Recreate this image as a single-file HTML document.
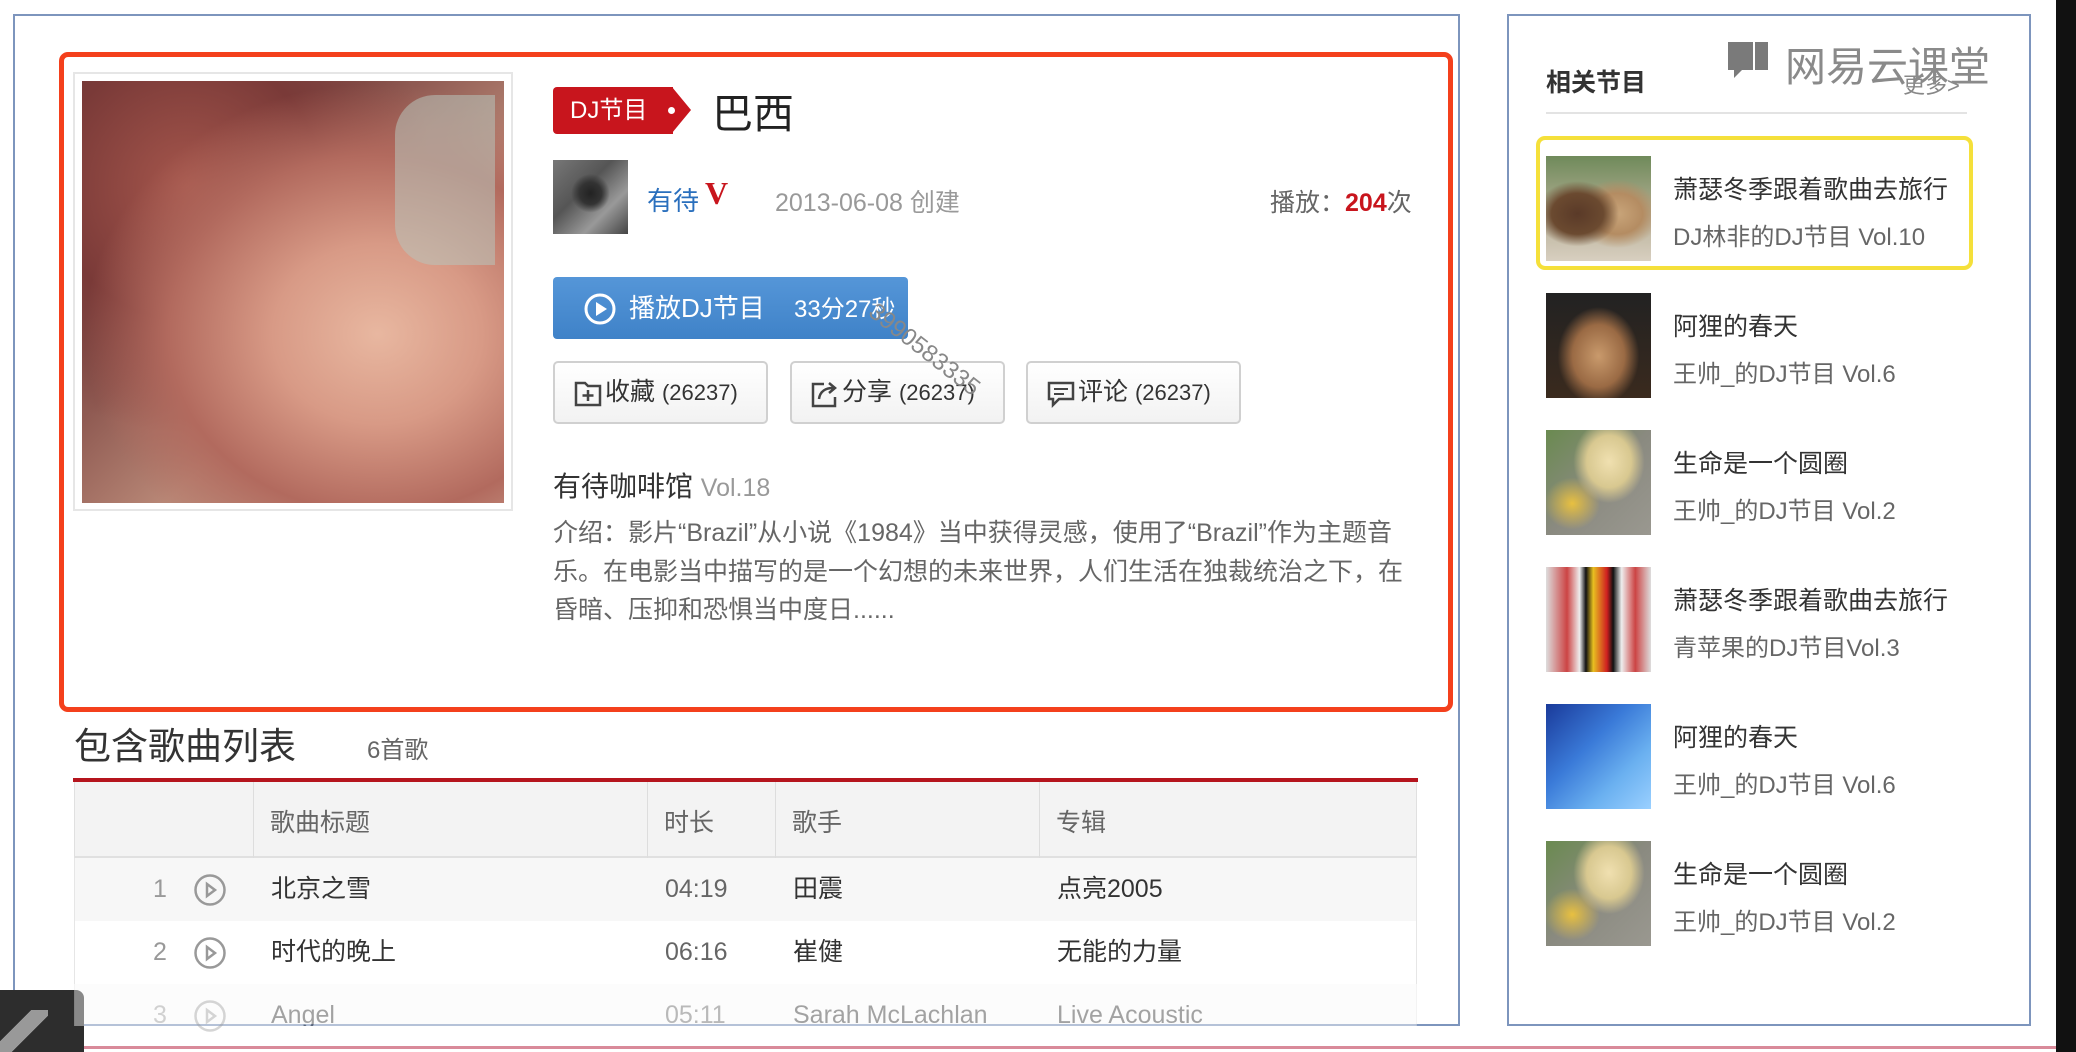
<!DOCTYPE html>
<html><head><meta charset="utf-8"><style>
*{margin:0;padding:0;box-sizing:border-box}
body{width:2076px;height:1052px;background:#fff;position:relative;overflow:hidden;font-family:"Liberation Sans","Noto Sans CJK SC",sans-serif;color:#333}
.a{position:absolute;white-space:nowrap}
.btn{position:absolute;top:361px;height:63px;width:215px;border:2px solid #d0d0d0;border-radius:5px;background:linear-gradient(#fff,#f2f2f2);font-size:25px;line-height:59px;color:#333;padding-left:50px}
.btn svg{position:absolute;left:18px;top:16px}
.thumb{position:absolute;left:1546px;width:105px;height:105px}
.t1{position:absolute;left:1673px;font-size:25px;color:#333}
.t2{position:absolute;left:1673px;font-size:24px;color:#666}
.row{position:absolute;left:74px;width:1343px;height:63px;font-size:25px;line-height:63px}
.row span{position:absolute;top:0}
</style></head><body>
<div class="a" style="left:13px;top:14px;width:1447px;height:1012px;border:2px solid #7d95bd"></div>
<div class="a" style="left:1507px;top:14px;width:524px;height:1012px;border:2px solid #7d95bd"></div>
<div class="a" style="left:2056px;top:0;width:20px;height:1052px;background:#111"></div>
<div class="a" style="left:0;top:1046px;width:2056px;height:3px;background:#d98a9a"></div>
<div class="a" style="left:0;top:990px;width:84px;height:62px;background:#2d2d2d;border-radius:0 8px 0 0"></div>
<div class="a" style="left:0;top:1010px;width:48px;height:42px;background:linear-gradient(135deg,transparent 35%,#999 35%,#999 60%,transparent 60%)"></div>

<div class="a" style="left:59px;top:52px;width:1394px;height:660px;border:5px solid #f4401c;border-radius:9px"></div>

<div class="a" style="left:73px;top:72px;width:440px;height:439px;border:2px solid #e6e6e6;background:#fff"></div>
<div class="a" style="left:82px;top:81px;width:422px;height:422px;background:radial-gradient(ellipse at 70% 60%,#e8b7a0 0,#d89a86 25%,#b26a5e 50%,transparent 70%),radial-gradient(ellipse at 25% 25%,#a5564c 0,#7a3a38 30%,transparent 55%),linear-gradient(135deg,#5e3534 0,#8f5a52 40%,#b98877 60%,#caa18f 100%)"></div>
<div class="a" style="left:395px;top:95px;width:100px;height:170px;background:#b8c4bb;opacity:.55;border-radius:40px 0 0 40px"></div>

<div class="a" style="left:553px;top:87px;width:120px;height:47px;background:#c8151d;border-radius:4px 0 0 4px;color:#fff;font-size:24px;line-height:47px;padding-left:17px">DJ节目</div>
<div class="a" style="left:672px;top:87px;width:0;height:0;border-top:23.5px solid transparent;border-bottom:23.5px solid transparent;border-left:19px solid #c8151d"></div>
<div class="a" style="left:668px;top:107px;width:7px;height:7px;border-radius:50%;background:#fff"></div>
<div class="a" style="left:712px;top:80px;font-size:41px;color:#222">巴西</div>

<div class="a" style="left:553px;top:160px;width:75px;height:74px;background:radial-gradient(circle at 50% 45%,#222 0,#333 20%,transparent 35%),linear-gradient(135deg,#777,#555 40%,#999 70%,#444)"></div>
<div class="a" style="left:647px;top:181px;font-size:26px;color:#2a6fbd">有待</div>
<div class="a" style="left:705px;top:175px;font-size:32px;color:#c8151d;font-family:'Liberation Serif',serif;font-weight:bold">V</div>
<div class="a" style="left:775px;top:183px;font-size:25px;color:#999">2013-06-08 创建</div>
<div class="a" style="left:1270px;top:183px;font-size:25px;color:#666">播放：<b style="color:#c8151d">204</b>次</div>

<div class="a" style="left:553px;top:277px;width:355px;height:62px;background:linear-gradient(#5596d8,#3f82c8);border-radius:4px;color:#fff;font-size:26px;line-height:62px;padding-left:76px">播放DJ节目 <span style="margin-left:22px;font-size:24px">33分27秒</span></div>
<svg class="a" style="left:583px;top:292px" width="34" height="34" viewBox="0 0 34 34"><circle cx="17" cy="17" r="14" fill="none" stroke="#fff" stroke-width="3"/><path d="M13 10 L24 17 L13 24 Z" fill="#fff"/></svg>
<div class="a" style="left:880px;top:298px;font-size:24px;color:#888;transform:rotate(38deg);transform-origin:0 0;z-index:5">3990583335</div>

<div class="btn" style="left:553px"><svg width="30" height="30" viewBox="0 0 30 30"><path d="M3 4h9l3 3h12v19H3z" fill="none" stroke="#444" stroke-width="2.5"/><path d="M15 11v11M9.5 16.5h11" stroke="#444" stroke-width="2.5"/></svg>收藏 <span style="font-size:22px">(26237)</span></div>
<div class="btn" style="left:790px"><svg width="30" height="30" viewBox="0 0 30 30"><path d="M14 5H3v22h22v-9" fill="none" stroke="#444" stroke-width="2.5"/><path d="M9 20c1-8 7-11 14-11M19 4l6 5-6 5" fill="none" stroke="#444" stroke-width="2.5"/></svg>分享 <span style="font-size:22px">(26237)</span></div>
<div class="btn" style="left:1026px"><svg width="30" height="30" viewBox="0 0 30 30"><path d="M3 4h24v16H13l-6 6v-6H3z" fill="none" stroke="#444" stroke-width="2.5"/><path d="M8 10h14M8 15h10" stroke="#444" stroke-width="2"/></svg>评论 <span style="font-size:22px">(26237)</span></div>

<div class="a" style="left:553px;top:465px;font-size:28px;color:#333">有待咖啡馆 <span style="font-size:25px;color:#999">Vol.18</span></div>
<div class="a" style="left:553px;top:514px;font-size:25px;color:#666;line-height:38.5px;white-space:normal;width:860px">介绍：影片“Brazil”从小说《1984》当中获得灵感，使用了“Brazil”作为主题音乐。在电影当中描写的是一个幻想的未来世界，人们生活在独裁统治之下，在昏暗、压抑和恐惧当中度日......</div>

<div class="a" style="left:74px;top:716px;font-size:37px;color:#333">包含歌曲列表</div>
<div class="a" style="left:367px;top:730px;font-size:24px;color:#666">6首歌</div>
<div class="a" style="left:73px;top:778px;width:1345px;height:4px;background:#b5141d"></div>
<div class="a" style="left:74px;top:782px;width:1343px;height:76px;background:#f3f3f3;border-bottom:2px solid #e0e0e0;border-left:1px solid #e0e0e0;border-right:1px solid #e0e0e0"></div>
<div class="a" style="left:253px;top:782px;width:1px;height:76px;background:#ddd"></div>
<div class="a" style="left:647px;top:782px;width:1px;height:76px;background:#ddd"></div>
<div class="a" style="left:775px;top:782px;width:1px;height:76px;background:#ddd"></div>
<div class="a" style="left:1039px;top:782px;width:1px;height:76px;background:#ddd"></div>
<div class="a" style="left:270px;top:803px;font-size:25px;color:#666">歌曲标题</div>
<div class="a" style="left:664px;top:803px;font-size:25px;color:#666">时长</div>
<div class="a" style="left:792px;top:803px;font-size:25px;color:#666">歌手</div>
<div class="a" style="left:1056px;top:803px;font-size:25px;color:#666">专辑</div>

<div class="row" style="top:858px;background:#f7f7f7;border-left:1px solid #e6e6e6;border-right:1px solid #e6e6e6"><span style="left:78px;color:#999">1</span><span style="left:196px;color:#333">北京之雪</span><span style="left:590px;color:#666">04:19</span><span style="left:718px;color:#333">田震</span><span style="left:982px;color:#333">点亮2005</span></div>
<div class="row" style="top:921px;background:#fff;border-left:1px solid #e6e6e6;border-right:1px solid #e6e6e6"><span style="left:78px;color:#999">2</span><span style="left:196px;color:#333">时代的晚上</span><span style="left:590px;color:#666">06:16</span><span style="left:718px;color:#333">崔健</span><span style="left:982px;color:#333">无能的力量</span></div>
<div class="row" style="top:984px;height:42px;background:#f9f9f9;opacity:.45;overflow:hidden;border-left:1px solid #e6e6e6;border-right:1px solid #e6e6e6"><span style="left:78px;color:#999">3</span><span style="left:196px;color:#333">Angel</span><span style="left:590px;color:#666">05:11</span><span style="left:718px;color:#333">Sarah McLachlan</span><span style="left:982px;color:#333">Live Acoustic</span></div>
<svg class="a" style="left:193px;top:873px" width="34" height="34" viewBox="0 0 34 34"><circle cx="17" cy="17" r="14.5" fill="none" stroke="#999" stroke-width="2.5"/><path d="M14 11l8 6-8 6z" fill="none" stroke="#999" stroke-width="2.5"/></svg>
<svg class="a" style="left:193px;top:936px" width="34" height="34" viewBox="0 0 34 34"><circle cx="17" cy="17" r="14.5" fill="none" stroke="#999" stroke-width="2.5"/><path d="M14 11l8 6-8 6z" fill="none" stroke="#999" stroke-width="2.5"/></svg>
<svg class="a" style="left:193px;top:999px;opacity:.4" width="34" height="34" viewBox="0 0 34 34"><circle cx="17" cy="17" r="14.5" fill="none" stroke="#999" stroke-width="2.5"/><path d="M14 11l8 6-8 6z" fill="none" stroke="#999" stroke-width="2.5"/></svg>

<div class="a" style="left:1546px;top:63px;font-size:25px;font-weight:bold;color:#333">相关节目</div>
<div class="a" style="left:1903px;top:68px;font-size:22px;color:#888">更多&gt;</div>
<svg class="a" style="left:1726px;top:36px" width="46" height="46" viewBox="0 0 46 46"><path d="M2 6h40v28H16l-8 8v-8H2z" fill="#7a7a7a"/><path d="M28 6v28" stroke="#fff" stroke-width="2"/></svg>
<div class="a" style="left:1785px;top:33px;font-size:41px;color:#8a8a8a">网易云课堂</div>
<div class="a" style="left:1546px;top:112px;width:421px;height:2px;background:#e3e3e3"></div>

<div class="a" style="left:1536px;top:136px;width:437px;height:134px;border:4px solid #f5e03a;border-radius:9px"></div>
<div class="thumb" style="top:156px;background:radial-gradient(ellipse at 30% 55%,#5a3a28 0,#6b4a30 25%,transparent 40%),radial-gradient(ellipse at 68% 55%,#c9a57a 0,#b48c62 25%,transparent 42%),linear-gradient(#6f8a5a,#b9b29a 60%,#d8cfc0)"></div>
<div class="t1" style="top:170px">萧瑟冬季跟着歌曲去旅行</div><div class="t2" style="top:217px">DJ林非的DJ节目 Vol.10</div>
<div class="thumb" style="top:293px;background:radial-gradient(ellipse at 50% 60%,#c99a6c 0,#9a6a44 35%,transparent 55%),linear-gradient(#222,#3a2a1e)"></div>
<div class="t1" style="top:307px">阿狸的春天</div><div class="t2" style="top:354px">王帅_的DJ节目 Vol.6</div>
<div class="thumb" style="top:430px;background:radial-gradient(ellipse at 60% 30%,#f0e0b0 0,#d8c890 25%,transparent 40%),radial-gradient(ellipse at 25% 70%,#e8c040 0,transparent 25%),linear-gradient(135deg,#6a8a50,#8a8a80 50%,#9a9890)"></div>
<div class="t1" style="top:444px">生命是一个圆圈</div><div class="t2" style="top:491px">王帅_的DJ节目 Vol.2</div>
<div class="thumb" style="top:567px;background:linear-gradient(90deg,#ddd 0,#c44 20%,#eee 32%,#111 38%,#e8c020 45%,#d02020 58%,#111 64%,#eee 72%,#c44 85%,#ddd)"></div>
<div class="t1" style="top:581px">萧瑟冬季跟着歌曲去旅行</div><div class="t2" style="top:628px">青苹果的DJ节目Vol.3</div>
<div class="thumb" style="top:704px;background:linear-gradient(135deg,#1a3a9a,#3a7ad8 40%,#6ab0f0 70%,#9ad0ff)"></div>
<div class="t1" style="top:718px">阿狸的春天</div><div class="t2" style="top:765px">王帅_的DJ节目 Vol.6</div>
<div class="thumb" style="top:841px;background:radial-gradient(ellipse at 60% 30%,#f0e0b0 0,#d8c890 25%,transparent 40%),radial-gradient(ellipse at 25% 70%,#e8c040 0,transparent 25%),linear-gradient(135deg,#6a8a50,#8a8a80 50%,#9a9890)"></div>
<div class="t1" style="top:855px">生命是一个圆圈</div><div class="t2" style="top:902px">王帅_的DJ节目 Vol.2</div>
</body></html>
